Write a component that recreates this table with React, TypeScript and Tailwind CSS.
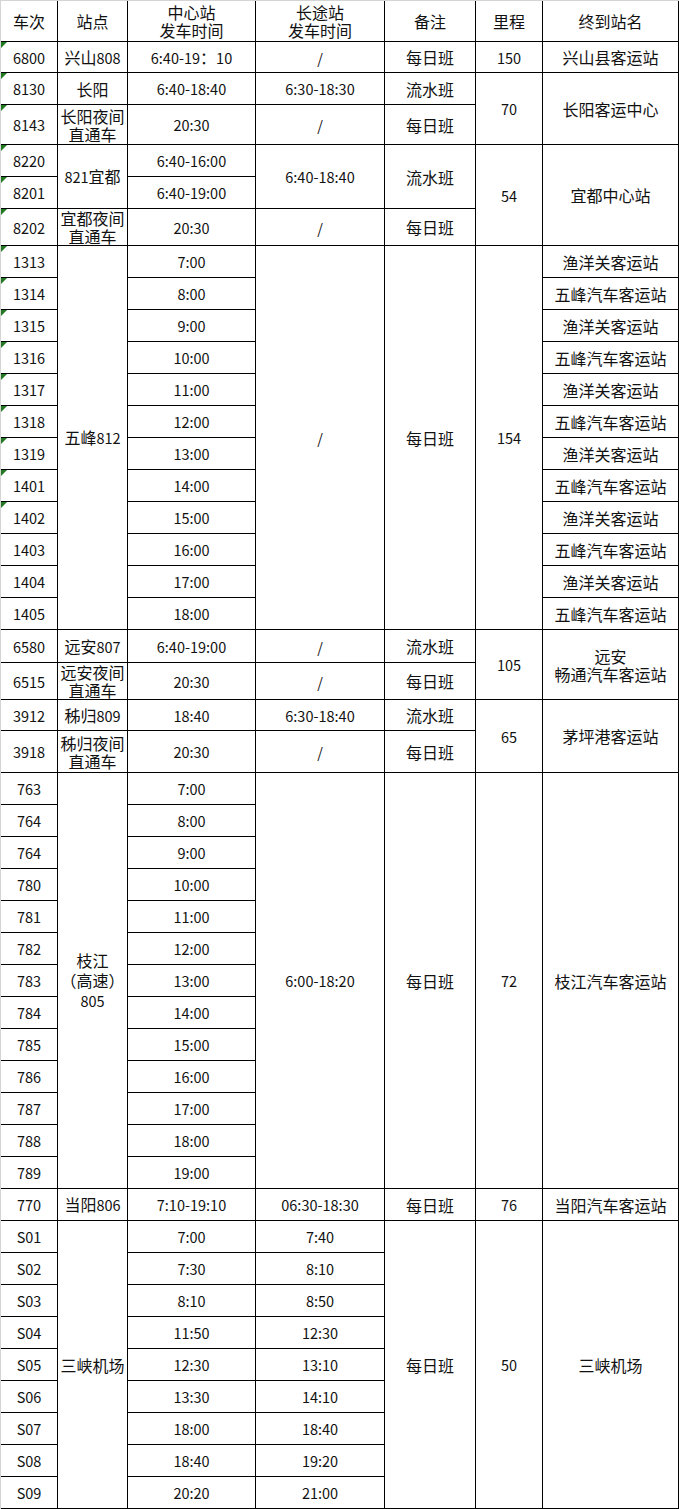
type Cell = { t: string; rs?: number; lh?: string };
type Row = { h: string; tri?: boolean; cells: Cell[] };

const c = (t: string, rs?: number, lh?: string): Cell => ({ t, rs, lh });
const D = "每日班";
const L = "流水班";

const wufengIds = ["1313", "1314", "1315", "1316", "1317", "1318", "1319", "1401", "1402", "1403", "1404", "1405"];
const wufengTimes = ["7:00", "8:00", "9:00", "10:00", "11:00", "12:00", "13:00", "14:00", "15:00", "16:00", "17:00", "18:00"];
const zhijiangIds = ["763", "764", "764", "780", "781", "782", "783", "784", "785", "786", "787", "788", "789"];
const zhijiangTimes = ["7:00", "8:00", "9:00", "10:00", "11:00", "12:00", "13:00", "14:00", "15:00", "16:00", "17:00", "18:00", "19:00"];
const airportIds = ["S01", "S02", "S03", "S04", "S05", "S06", "S07", "S08", "S09"];
const airportCenter = ["7:00", "7:30", "8:10", "11:50", "12:30", "13:30", "18:00", "18:40", "20:20"];
const airportLong = ["7:40", "8:10", "8:50", "12:30", "13:10", "14:10", "18:40", "19:20", "21:00"];

const rows: Row[] = [
  { h: "h-[31px]", tri: true, cells: [c("6800"), c("兴山808"), c("6:40-19：10"), c("/"), c(D), c("150"), c("兴山县客运站")] },
  { h: "h-[32px]", tri: true, cells: [c("8130"), c("长阳"), c("6:40-18:40"), c("6:30-18:30"), c(L), c("70", 2), c("长阳客运中心", 2)] },
  { h: "h-[40px]", tri: true, cells: [c("8143"), c("长阳夜间\n直通车"), c("20:30"), c("/"), c(D)] },
  { h: "h-[32px]", tri: true, cells: [c("8220"), c("821宜都", 2), c("6:40-16:00"), c("6:40-18:40", 2), c(L, 2), c("54", 3), c("宜都中心站", 3)] },
  { h: "h-[32px]", tri: true, cells: [c("8201"), c("6:40-19:00")] },
  { h: "h-[37px]", tri: true, cells: [c("8202"), c("宜都夜间\n直通车"), c("20:30"), c("/"), c(D)] },
  ...wufengIds.map((id, i) => ({
    h: "h-[32px]",
    tri: i < 9,
    cells:
      i === 0
        ? [c(id), c("五峰812", 12), c(wufengTimes[i]), c("/", 12), c(D, 12), c("154", 12), c("渔洋关客运站")]
        : [c(id), c(wufengTimes[i]), c(i % 2 === 0 ? "渔洋关客运站" : "五峰汽车客运站")],
  })),
  { h: "h-[33px]", cells: [c("6580"), c("远安807"), c("6:40-19:00"), c("/"), c(L), c("105", 2), c("远安\n畅通汽车客运站", 2)] },
  { h: "h-[37px]", cells: [c("6515"), c("远安夜间\n直通车"), c("20:30"), c("/"), c(D)] },
  { h: "h-[31px]", cells: [c("3912"), c("秭归809"), c("18:40"), c("6:30-18:40"), c(L), c("65", 2), c("茅坪港客运站", 2)] },
  { h: "h-[42px]", cells: [c("3918"), c("秭归夜间\n直通车"), c("20:30"), c("/"), c(D)] },
  ...zhijiangIds.map((id, i) => ({
    h: "h-[32px]",
    cells:
      i === 0
        ? [
            c(id),
            c("枝江\n（高速）\n805", 13, "leading-[20px]"),
            c(zhijiangTimes[i]),
            c("6:00-18:20", 13),
            c(D, 13),
            c("72", 13),
            c("枝江汽车客运站", 13),
          ]
        : [c(id), c(zhijiangTimes[i])],
  })),
  { h: "h-[32px]", cells: [c("770"), c("当阳806"), c("7:10-19:10"), c("06:30-18:30"), c(D), c("76"), c("当阳汽车客运站")] },
  ...airportIds.map((id, i) => ({
    h: "h-[32px]",
    cells:
      i === 0
        ? [c(id), c("三峡机场", 9), c(airportCenter[i]), c(airportLong[i]), c(D, 9), c("50", 9), c("三峡机场", 9)]
        : [c(id), c(airportCenter[i]), c(airportLong[i])],
  })),
];

// ASCII runs are set a bit smaller so the digits come out as narrow as the original's
function Txt({ s }: { s: string }) {
  const parts = s.split(/([\x21-\x7e]+)/);
  return (
    <>
      {parts.map((p, i) =>
        /^[\x21-\x7e]+$/.test(p) ? (
          <span key={i} className="text-[14.5px]">
            {p}
          </span>
        ) : (
          <span key={i}>{p}</span>
        )
      )}
    </>
  );
}

const cellCls =
  "relative p-0 border-r border-b border-black text-center align-middle whitespace-pre-line font-normal";

export default function App() {
  const header = ["车次", "站点", "中心站\n发车时间", "长途站\n发车时间", "备注", "里程", "终到站名"];
  return (
    <div className="w-[679px] bg-white text-[16px] text-[#111] font-['Noto_Sans_CJK_SC','Noto_Sans',sans-serif]">
      <div className="border-l border-t border-[#d4d4d4]">
        <table className="table-fixed border-separate border-spacing-0 w-[678px]">
          <colgroup>
            <col className="w-[57px]" />
            <col className="w-[70px]" />
            <col className="w-[128px]" />
            <col className="w-[129px]" />
            <col className="w-[91px]" />
            <col className="w-[67px]" />
            <col className="w-[136px]" />
          </colgroup>
          <thead>
            <tr className="h-[41px]">
              {header.map((h) => (
                <th key={h} className={`${cellCls} leading-[18px]`}>
                  <Txt s={h} />
                </th>
              ))}
            </tr>
          </thead>
          <tbody>
            {rows.map((r, ri) => (
              <tr key={ri} className={r.h}>
                {r.cells.map((cell, ci) => (
                  <td key={ci} rowSpan={cell.rs} className={`${cellCls} ${cell.lh ?? "leading-[18px]"}`}>
                    {ci === 0 && r.tri && (
                      <span className="absolute left-0 top-0 w-0 h-0 border-t-[6px] border-r-[6px] border-t-[#217a21] border-r-transparent" />
                    )}
                    <Txt s={cell.t} />
                  </td>
                ))}
              </tr>
            ))}
          </tbody>
        </table>
      </div>
    </div>
  );
}
